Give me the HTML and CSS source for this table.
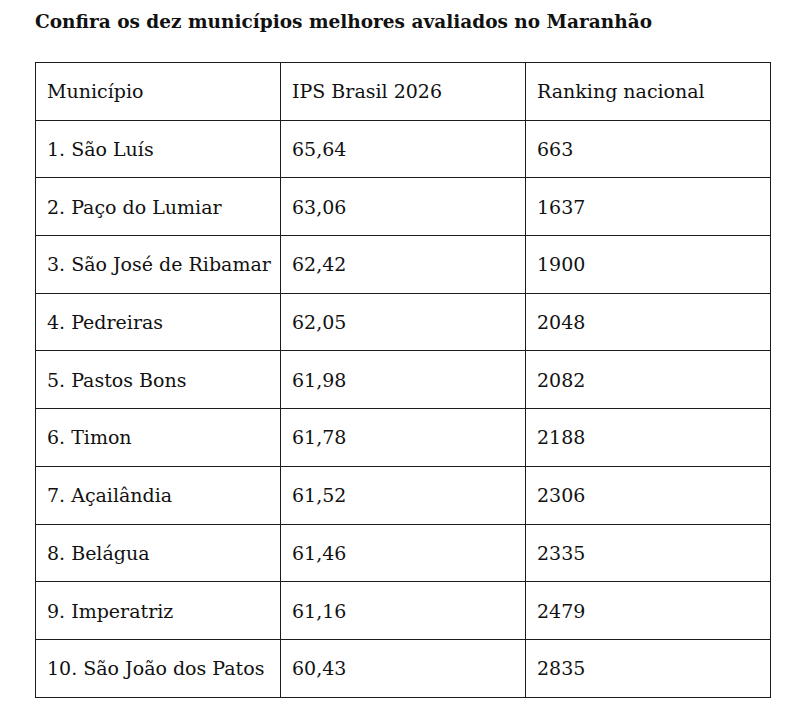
FILE: index.html
```html
<!DOCTYPE html>
<html lang="pt-BR">
<head>
<meta charset="utf-8">
<title>IPS Brasil 2026 - Maranhão</title>
<link rel="stylesheet" href="styles.css">
</head>
<body>
<main class="page">
  <h2 class="title">Confira os dez municípios melhores avaliados no Maranhão</h2>
  <table class="ranking">
    <thead>
      <tr><th>Município</th><th>IPS Brasil 2026</th><th>Ranking nacional</th></tr>
    </thead>
    <tbody>
      <tr><td>1. São Luís</td><td>65,64</td><td>663</td></tr>
      <tr><td>2. Paço do Lumiar</td><td>63,06</td><td>1637</td></tr>
      <tr><td>3. São José de Ribamar</td><td>62,42</td><td>1900</td></tr>
      <tr><td>4. Pedreiras</td><td>62,05</td><td>2048</td></tr>
      <tr><td>5. Pastos Bons</td><td>61,98</td><td>2082</td></tr>
      <tr><td>6. Timon</td><td>61,78</td><td>2188</td></tr>
      <tr><td>7. Açailândia</td><td>61,52</td><td>2306</td></tr>
      <tr><td>8. Belágua</td><td>61,46</td><td>2335</td></tr>
      <tr><td>9. Imperatriz</td><td>61,16</td><td>2479</td></tr>
      <tr><td>10. São João dos Patos</td><td>60,43</td><td>2835</td></tr>
    </tbody>
  </table>
</main>
</body>
</html>
```
FILE: styles.css
```css
html, body {
  margin: 0;
  padding: 0;
  background: #ffffff;
}
.page {
  padding: 8px 16px 0 35px;
  font-family: "DejaVu Serif", "Liberation Serif", serif;
  color: #111111;
}
.title {
  margin: 0 0 26px 0;
  font-size: 18.5px;
  line-height: 28px;
  font-weight: bold;
  color: #111111;
}
.ranking {
  width: 736px;
  border-collapse: collapse;
  table-layout: fixed;
  font-size: 19px;
}
.ranking th,
.ranking td {
  border: 1px solid #1c1c1c;
  height: 56.7px;
  padding: 0 11px;
  text-align: left;
  vertical-align: middle;
  font-weight: normal;
  line-height: 30px;
  white-space: nowrap;
}
```
